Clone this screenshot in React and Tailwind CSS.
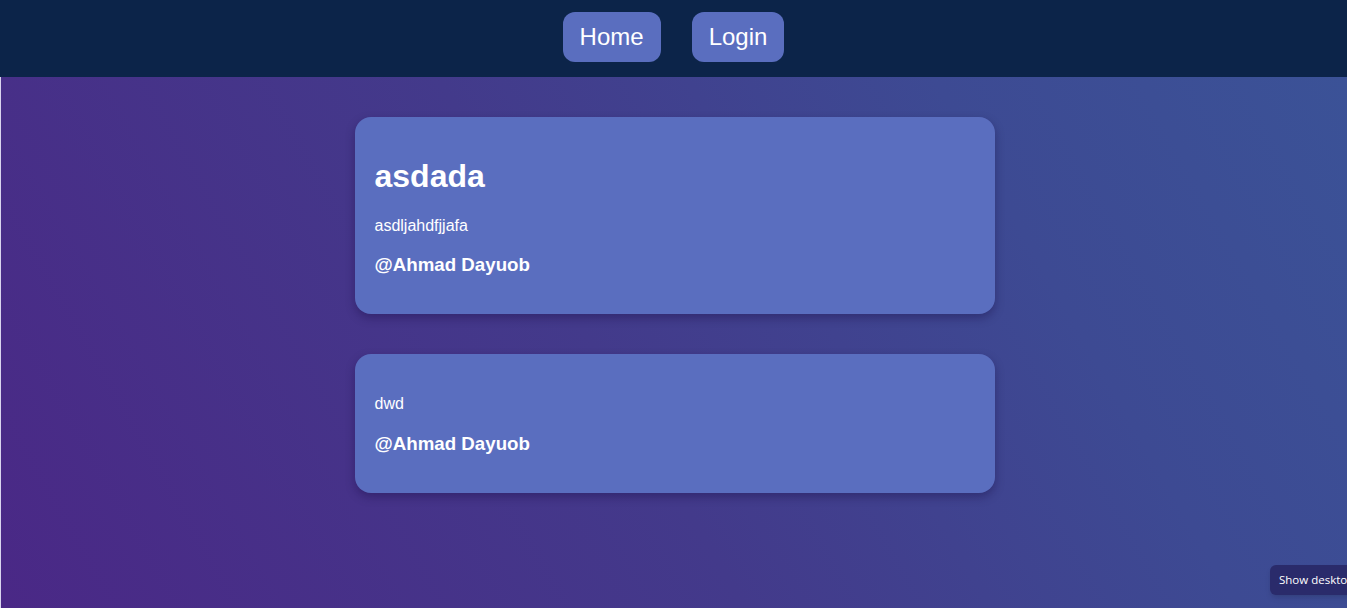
import React from 'react';

const posts = [
  { title: 'asdada', body: 'asdljahdfjjafa', author: 'Ahmad Dayuob' },
  { title: '', body: 'dwd', author: 'Ahmad Dayuob' },
];

const PostCard = ({ title, body, author }) => (
  <div className="w-[640px] rounded-2xl bg-[#5a6ebf] p-5 text-white shadow-[0_4px_10px_rgba(20,10,60,0.35)]">
    <h1 className="my-[21.44px] text-[32px] font-bold leading-[1.15]">{title}</h1>
    <p className="my-4 text-base leading-[1.15]">{body}</p>
    <h3 className="my-[18.72px] text-[18.72px] font-bold leading-[1.15]">@{author}</h3>
  </div>
);

export default function App() {
  return (
    <div className="relative flex h-[608px] flex-col overflow-hidden font-['Liberation_Sans',Arial,sans-serif]">
      {/* barra superior */}
      <nav className="flex h-[77px] shrink-0 items-start justify-center gap-[31px] bg-[#0c2449] pt-3">
        <a className="flex h-[50px] items-center rounded-xl bg-[#5a6ebf] px-[17px] text-2xl text-white">Home</a>
        <a className="flex h-[50px] items-center rounded-xl bg-[#5a6ebf] px-[17px] text-2xl text-white">Login</a>
      </nav>

      <main className="flex flex-1 flex-col items-center gap-10 border-l border-[#d9d4ee] bg-[linear-gradient(60deg,#4a2886_0%,#433a8b_45%,#3d4a93_75%,#3b5297_100%)] pl-px pt-10">
        {posts.map((post, i) => (
          <PostCard key={i} {...post} />
        ))}
      </main>

      {/* tooltip del sistema */}
      <div className="absolute left-[1270px] top-[565px] flex h-[30px] w-[120px] items-center rounded-md bg-[#2a2b6b] pl-[9px] font-['Open_Sans',sans-serif] text-[11.5px] whitespace-nowrap text-white shadow-md">
        Show desktop
      </div>
    </div>
  );
}
